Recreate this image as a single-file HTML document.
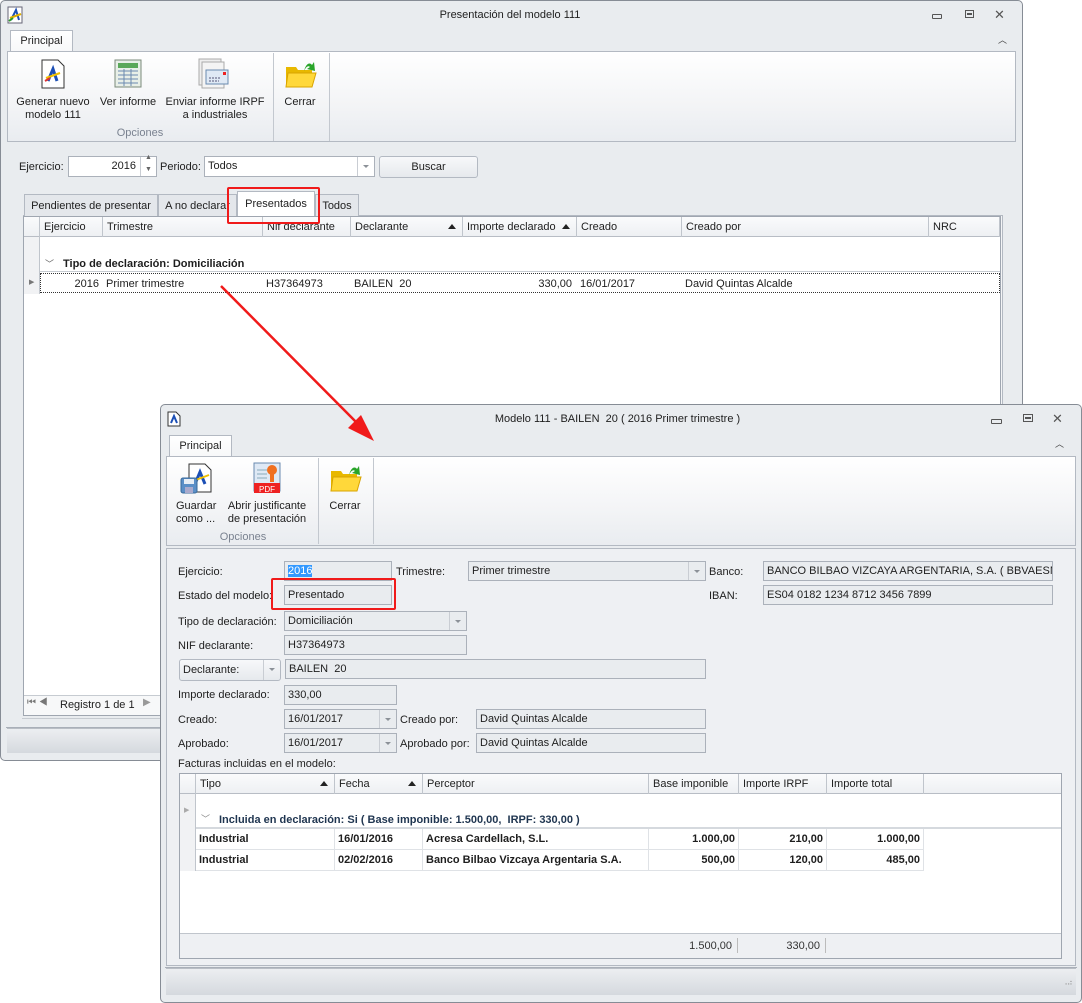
<!DOCTYPE html>
<html><head><meta charset="utf-8">
<style>
*{box-sizing:border-box;margin:0;padding:0}
body{width:1082px;height:1003px;background:#fff;position:relative;overflow:hidden;font-family:"Liberation Sans",Tahoma,sans-serif;font-size:11px;color:#1e1e1e}
.a{position:absolute}
.win{position:absolute;background:#e9ecef;border:1px solid #868c95;border-radius:5px}
.ribbon{position:absolute;background:linear-gradient(#fff,#f3f4f6 60%,#e9ecf0);border:1px solid #b3b9c2}
.tab{position:absolute;background:linear-gradient(#fff,#f7f8f9);border:1px solid #b3b9c2;border-bottom:none;text-align:center;line-height:20px}
.sep{position:absolute;width:1px;background:#c3c8cf}
.t{position:absolute;white-space:nowrap}
.c{text-align:center}
.inp{position:absolute;background:#fff;border:1px solid #abb1ba;line-height:18px;padding-left:3px;white-space:nowrap;overflow:hidden}
.ro{background:#e9ecef}
.dd{position:absolute;top:0;right:0;bottom:0;width:17px;border-left:1px solid #c9cdd3}
.dd:after{content:"";position:absolute;left:5px;top:8px;border:3px solid transparent;border-top:3px solid #8c9198}
.status{position:absolute;background:linear-gradient(#eceef1,#d5d9de);border-top:1px solid #b9bec5}
.grid{position:absolute;background:#fff;border:1px solid #9fa6b0}
.hd{position:absolute;height:20px;background:linear-gradient(#fafbfc,#eef0f3);border-bottom:1px solid #b8bdc5;line-height:19px}
.hc{position:absolute;top:0;height:20px;border-right:1px solid #c0c5cc;padding-left:4px}
.up:after{content:"";position:absolute;right:6px;top:7px;border:4px solid transparent;border-top:none;border-bottom:5px solid #222}
.bold{font-weight:bold}
.cell{position:absolute;height:21px;line-height:20px;border-right:1px solid #dfe2e6;border-bottom:1px solid #dfe2e6;padding:0 3px;font-weight:bold;white-space:nowrap}
.r{text-align:right}
</style></head><body>

<!-- WINDOW 1 -->
<div class="win" style="left:0;top:0;width:1023px;height:761px"></div>
<svg class="a" style="left:7px;top:6px" width="18" height="18"><rect x="1" y="1" width="14" height="16" fill="#fff" stroke="#667"/><path d="M4 14 L9 4 L12 14" stroke="#1c4fb5" stroke-width="2" fill="none"/><path d="M3 12 L14 8" stroke="#e0b000" stroke-width="2"/><path d="M2 15 L6 12" stroke="#2a9a2a" stroke-width="2"/></svg>
<div class="t" style="left:300px;width:420px;top:9px;text-align:center">Presentación del modelo 111</div>
<div class="a" style="left:932px;top:14px;width:10px;height:5px;border:1px solid #555;border-radius:1px"></div>
<div class="a" style="left:965px;top:10px;width:9px;height:8px;border:1px solid #555"></div><div class="a" style="left:967px;top:13px;width:5px;height:2px;background:#555"></div>
<div class="t" style="left:994px;top:7px;font-size:13px;color:#555">✕</div>
<div class="t" style="left:998px;top:33px;font-size:9px;color:#444">︿</div>

<div class="tab" style="left:10px;top:30px;width:63px;height:22px">Principal</div>
<div class="ribbon" style="left:7px;top:51px;width:1009px;height:91px"></div>
<div class="sep" style="left:273px;top:53px;height:88px"></div>
<div class="sep" style="left:329px;top:53px;height:88px"></div>
<svg class="a" style="left:40px;top:59px" width="26" height="30"><path d="M2 1H18L24 7V29H2Z" fill="#fff" stroke="#333"/><path d="M8 22 L13 10 L17 22" stroke="#1c4fb5" stroke-width="3" fill="none"/><path d="M6 19 L20 14" stroke="#f0c000" stroke-width="2"/><path d="M5 22 L10 19" stroke="#d33" stroke-width="2"/></svg>
<svg class="a" style="left:113px;top:59px" width="30" height="30"><rect x="2" y="1" width="26" height="27" fill="#e8efe8" stroke="#7a8a7a"/><rect x="5" y="4" width="20" height="5" fill="#5aa85a"/><g stroke="#6a8ab0"><path d="M5 12H25M5 16H25M5 20H25M5 24H25M11 10V27M18 10V27"/></g></svg>
<svg class="a" style="left:197px;top:58px" width="34" height="32"><rect x="2" y="1" width="22" height="26" fill="#eee" stroke="#aaa"/><rect x="5" y="4" width="22" height="26" fill="#f4f4f4" stroke="#aaa"/><rect x="9" y="12" width="22" height="14" fill="#dfe9f5" stroke="#6a8ab0"/><rect x="26" y="14" width="3" height="3" fill="#e22"/><path d="M12 20H24M12 23H22" stroke="#557" stroke-dasharray="2 1"/></svg>
<svg class="a" style="left:284px;top:57px" width="34" height="34"><path d="M2 10H12L14 13H28V30H2Z" fill="#e8b800"/><path d="M4 16H32L28 30H2Z" fill="#ffd83a" stroke="#d9a400"/><path d="M20 14 C22 6 26 5 28 8 L30 5 L31 14 L23 12 L26 10 C24 8 22 10 20 14Z" fill="#2aa52a"/></svg>
<div class="t c" style="left:12px;width:82px;top:96px;line-height:13px">Generar nuevo<br>modelo 111</div>
<div class="t c" style="left:98px;width:60px;top:96px">Ver informe</div>
<div class="t c" style="left:163px;width:104px;top:96px;line-height:13px">Enviar informe IRPF<br>a industriales</div>
<div class="t c" style="left:280px;width:40px;top:96px">Cerrar</div>
<div class="t c" style="left:100px;width:80px;top:127px;color:#7a8290">Opciones</div>

<div class="t" style="left:19px;top:161px">Ejercicio:</div>
<div class="inp" style="left:68px;top:156px;width:89px;height:21px;text-align:right;padding-right:20px;line-height:19px">2016</div>
<div class="a" style="left:140px;top:157px;width:1px;height:19px;background:#c9cdd3"></div>
<div class="t" style="left:145px;top:154px;font-size:7px;color:#666">▲</div><div class="t" style="left:145px;top:166px;font-size:7px;color:#666">▼</div>
<div class="t" style="left:160px;top:161px">Periodo:</div>
<div class="inp" style="left:204px;top:156px;width:171px;height:21px;line-height:19px">Todos<div class="dd"></div></div>
<div class="a" style="left:379px;top:156px;width:99px;height:22px;border:1px solid #b3b9c2;border-radius:3px;background:linear-gradient(#f7f8fa,#e6e9ed);text-align:center;line-height:21px">Buscar</div>

<div class="a" style="left:23px;top:215px;width:980px;height:501px;border:1px solid #b3b9c2;background:#f3f4f6"></div>
<div class="tab" style="left:24px;top:194px;width:134px;height:22px;background:#e4e7eb;line-height:22px">Pendientes de presentar</div>
<div class="tab" style="left:158px;top:194px;width:79px;height:22px;background:#e4e7eb;line-height:22px">A no declarar</div>
<div class="tab" style="left:315px;top:194px;width:44px;height:22px;background:#e4e7eb;line-height:22px">Todos</div>
<div class="tab" style="left:237px;top:191px;width:78px;height:25px;background:#fff;line-height:25px">Presentados</div>

<div class="grid" style="left:23px;top:216px;width:978px;height:500px"></div>
<div class="hd" style="left:24px;top:217px;width:976px;line-height:20px">
<div class="hc" style="left:0;width:16px"></div>
<div class="hc" style="left:16px;width:63px">Ejercicio</div>
<div class="hc" style="left:79px;width:160px">Trimestre</div>
<div class="hc" style="left:239px;width:88px">Nif declarante</div>
<div class="hc up" style="left:327px;width:112px">Declarante</div>
<div class="hc up" style="left:439px;width:114px">Importe declarado</div>
<div class="hc" style="left:553px;width:105px">Creado</div>
<div class="hc" style="left:658px;width:247px">Creado por</div>
<div class="hc" style="left:905px;width:71px">NRC</div>
</div>
<div class="a" style="left:24px;top:237px;width:16px;height:57px;background:#f1f2f4;border-right:1px solid #c0c5cc"></div>
<div class="t" style="left:45px;top:257px;color:#666;font-size:9px">﹀</div>
<div class="t bold" style="left:63px;top:258px">Tipo de declaración: Domiciliación</div>
<div class="a" style="left:40px;top:271px;width:960px;height:1px;background:#c6cbd1"></div>
<div class="a" style="left:40px;top:273px;width:960px;height:20px;border:1px dotted #333"></div>
<div class="t" style="left:29px;top:278px;font-size:7px;color:#777">▶</div>
<div class="t" style="left:40px;width:59px;top:278px;text-align:right">2016</div>
<div class="t" style="left:106px;top:278px">Primer trimestre</div>
<div class="t" style="left:266px;top:278px">H37364973</div>
<div class="t" style="left:354px;top:278px">BAILEN&nbsp; 20</div>
<div class="t" style="left:462px;width:110px;top:278px;text-align:right">330,00</div>
<div class="t" style="left:580px;top:278px">16/01/2017</div>
<div class="t" style="left:685px;top:278px">David Quintas Alcalde</div>
<div class="a" style="left:24px;top:695px;width:976px;height:20px;border-top:1px solid #c6cbd1;background:#f7f8f9"></div>
<div class="t" style="left:27px;top:697px;color:#777;font-size:10px">⏮ ◀</div>
<div class="t" style="left:60px;top:699px">Registro 1 de 1</div>
<div class="t" style="left:143px;top:697px;color:#999;font-size:10px">▶</div>
<div class="a" style="left:22px;top:716px;width:982px;height:3px;border-bottom:1px solid #c6cbd1"></div>
<div class="status" style="left:7px;top:728px;width:1009px;height:25px"></div>
<div class="a" style="left:6px;top:727px;width:1011px;height:1px;background:#a9afb8"></div>

<div class="a" style="left:227px;top:187px;width:93px;height:37px;border:2px solid #f01a1a;border-radius:2px"></div>

<!-- WINDOW 2 -->
<div class="win" style="left:160px;top:404px;width:922px;height:599px;background:#e9ecef"></div>
<svg class="a" style="left:167px;top:411px" width="14" height="16"><path d="M1 1H9L13 5V15H1Z" fill="#fff" stroke="#333"/><path d="M4 12 L7 5 L10 12" stroke="#1c4fb5" stroke-width="2" fill="none"/></svg>
<div class="t" style="left:420px;width:395px;top:413px;text-align:center">Modelo 111 - BAILEN&nbsp; 20 ( 2016 Primer trimestre )</div>
<div class="a" style="left:991px;top:419px;width:11px;height:5px;border:1px solid #555;border-radius:1px"></div>
<div class="a" style="left:1023px;top:414px;width:10px;height:8px;border:1px solid #555"></div><div class="a" style="left:1025px;top:417px;width:6px;height:2px;background:#555"></div>
<div class="t" style="left:1052px;top:411px;font-size:13px;color:#555">✕</div>
<div class="t" style="left:1055px;top:437px;font-size:9px;color:#444">︿</div>

<div class="tab" style="left:169px;top:435px;width:63px;height:22px">Principal</div>
<div class="ribbon" style="left:166px;top:456px;width:910px;height:90px"></div>
<div class="sep" style="left:318px;top:458px;height:86px"></div>
<div class="sep" style="left:373px;top:458px;height:86px"></div>
<svg class="a" style="left:180px;top:462px" width="34" height="34"><path d="M9 2H25L31 8V30H9Z" fill="#fff" stroke="#333"/><path d="M15 22 L20 10 L25 22" stroke="#1c4fb5" stroke-width="3" fill="none"/><path d="M13 19 L29 13" stroke="#f0c000" stroke-width="2"/><rect x="1" y="16" width="16" height="15" rx="2" fill="#5b8fc7" stroke="#3a6a9a"/><rect x="4" y="17" width="10" height="5" fill="#e8eef5"/><rect x="5" y="25" width="8" height="6" fill="#aac"/></svg>
<svg class="a" style="left:253px;top:462px" width="28" height="32"><rect x="1" y="1" width="26" height="28" fill="#dfe9f5" stroke="#6a8ab0"/><path d="M4 8H14M4 12H14M4 16H14" stroke="#8ab"/><circle cx="19" cy="8" r="5" fill="#f07020"/><rect x="17" y="12" width="4" height="8" fill="#f07020"/><rect x="1" y="21" width="26" height="10" fill="#e22"/><text x="14" y="30" font-size="8" fill="#fff" text-anchor="middle" font-family="Liberation Sans">PDF</text></svg>
<svg class="a" style="left:329px;top:461px" width="34" height="34"><path d="M2 10H12L14 13H28V30H2Z" fill="#e8b800"/><path d="M4 16H32L28 30H2Z" fill="#ffd83a" stroke="#d9a400"/><path d="M20 14 C22 6 26 5 28 8 L30 5 L31 14 L23 12 L26 10 C24 8 22 10 20 14Z" fill="#2aa52a"/></svg>
<div class="t" style="left:176px;top:500px;line-height:13px">Guardar<br>como ...</div>
<div class="t c" style="left:224px;width:86px;top:500px;line-height:13px">Abrir justificante<br>de presentación</div>
<div class="t c" style="left:325px;width:40px;top:500px">Cerrar</div>
<div class="t c" style="left:203px;width:80px;top:531px;color:#7a8290">Opciones</div>

<div class="a" style="left:166px;top:548px;width:910px;height:418px;border:1px solid #b3b9c2;background:#eef0f3"></div>

<div class="t" style="left:178px;top:566px">Ejercicio:</div>
<div class="inp ro" style="left:284px;top:561px;width:108px;height:20px"><span style="background:#3399ff;color:#fff">2016</span></div>
<div class="t" style="left:396px;top:566px">Trimestre:</div>
<div class="inp ro" style="left:468px;top:561px;width:238px;height:20px">Primer trimestre<div class="dd"></div></div>
<div class="t" style="left:709px;top:566px">Banco:</div>
<div class="inp ro" style="left:763px;top:561px;width:290px;height:20px">BANCO BILBAO VIZCAYA ARGENTARIA, S.A. ( BBVAESMM)</div>

<div class="t" style="left:178px;top:590px">Estado del modelo:</div>
<div class="inp ro" style="left:284px;top:585px;width:108px;height:20px">Presentado</div>
<div class="a" style="left:271px;top:578px;width:125px;height:32px;border:2px solid #f01a1a;border-radius:2px"></div>
<div class="t" style="left:709px;top:590px">IBAN:</div>
<div class="inp ro" style="left:763px;top:585px;width:290px;height:20px">ES04 0182 1234 8712 3456 7899</div>

<div class="t" style="left:178px;top:616px">Tipo de declaración:</div>
<div class="inp ro" style="left:284px;top:611px;width:183px;height:20px">Domiciliación<div class="dd"></div></div>
<div class="t" style="left:178px;top:640px">NIF declarante:</div>
<div class="inp ro" style="left:284px;top:635px;width:183px;height:20px">H37364973</div>

<div class="a" style="left:179px;top:659px;width:102px;height:22px;border:1px solid #b3b9c2;border-radius:3px;background:linear-gradient(#f7f8fa,#e6e9ed);line-height:20px;padding-left:3px">Declarante:<div class="dd" style="border-left:1px solid #c9cdd3"></div></div>
<div class="inp ro" style="left:285px;top:659px;width:421px;height:20px">BAILEN&nbsp; 20</div>

<div class="t" style="left:178px;top:689px">Importe declarado:</div>
<div class="inp ro" style="left:284px;top:685px;width:113px;height:20px">330,00</div>
<div class="t" style="left:178px;top:714px">Creado:</div>
<div class="inp ro" style="left:284px;top:709px;width:113px;height:20px">16/01/2017<div class="dd"></div></div>
<div class="t" style="left:400px;top:714px">Creado por:</div>
<div class="inp ro" style="left:476px;top:709px;width:230px;height:20px">David Quintas Alcalde</div>
<div class="t" style="left:178px;top:738px">Aprobado:</div>
<div class="inp ro" style="left:284px;top:733px;width:113px;height:20px">16/01/2017<div class="dd"></div></div>
<div class="t" style="left:400px;top:738px">Aprobado por:</div>
<div class="inp ro" style="left:476px;top:733px;width:230px;height:20px">David Quintas Alcalde</div>
<div class="t" style="left:178px;top:758px">Facturas incluidas en el modelo:</div>

<div class="grid" style="left:179px;top:773px;width:883px;height:186px"></div>
<div class="hd" style="left:180px;top:774px;width:881px;line-height:20px">
<div class="hc" style="left:0;width:16px"></div>
<div class="hc up" style="left:16px;width:139px">Tipo</div>
<div class="hc up" style="left:155px;width:88px">Fecha</div>
<div class="hc" style="left:243px;width:226px">Perceptor</div>
<div class="hc" style="left:469px;width:90px">Base imponible</div>
<div class="hc" style="left:559px;width:88px">Importe IRPF</div>
<div class="hc" style="left:647px;width:97px">Importe total</div>
</div>
<div class="a" style="left:180px;top:794px;width:16px;height:77px;background:#f1f2f4;border-right:1px solid #c0c5cc"></div>
<div class="t" style="left:184px;top:806px;font-size:7px;color:#aaa">▶</div>
<div class="t" style="left:201px;top:812px;color:#888;font-size:9px">﹀</div>
<div class="t bold" style="left:219px;top:814px;color:#1f3550">Incluida en declaración: Si ( Base imponible: 1.500,00,&nbsp; IRPF: 330,00 )</div>
<div class="a" style="left:196px;top:827px;width:865px;height:2px;background:#d5d9de"></div>
<div class="cell" style="left:196px;top:829px;width:139px">Industrial</div>
<div class="cell" style="left:335px;top:829px;width:88px">16/01/2016</div>
<div class="cell" style="left:423px;top:829px;width:226px">Acresa Cardellach, S.L.</div>
<div class="cell r" style="left:649px;top:829px;width:90px">1.000,00</div>
<div class="cell r" style="left:739px;top:829px;width:88px">210,00</div>
<div class="cell r" style="left:827px;top:829px;width:97px">1.000,00</div>
<div class="cell" style="left:196px;top:850px;width:139px">Industrial</div>
<div class="cell" style="left:335px;top:850px;width:88px">02/02/2016</div>
<div class="cell" style="left:423px;top:850px;width:226px">Banco Bilbao Vizcaya Argentaria S.A.</div>
<div class="cell r" style="left:649px;top:850px;width:90px">500,00</div>
<div class="cell r" style="left:739px;top:850px;width:88px">120,00</div>
<div class="cell r" style="left:827px;top:850px;width:97px">485,00</div>
<div class="a" style="left:180px;top:933px;width:881px;height:25px;border-top:1px solid #c0c5cc;background:#eef0f3"></div>
<div class="t" style="left:649px;width:83px;top:940px;text-align:right;color:#333">1.500,00</div>
<div class="a" style="left:737px;top:938px;width:1px;height:15px;background:#bbb"></div>
<div class="t" style="left:739px;width:81px;top:940px;text-align:right;color:#333">330,00</div>
<div class="a" style="left:825px;top:938px;width:1px;height:15px;background:#bbb"></div>

<div class="status" style="left:166px;top:968px;width:910px;height:27px"></div>
<div class="a" style="left:165px;top:967px;width:912px;height:1px;background:#a9afb8"></div>
<div class="t" style="left:1062px;top:978px;font-size:8px;color:#999;letter-spacing:-1px">⠠⠴</div>

<!-- ARROW on top -->
<svg class="a" style="left:0;top:0" width="1082" height="1003"><line x1="221" y1="286" x2="362" y2="428" stroke="#f01a1a" stroke-width="2.5"/><polygon points="374,441 348,428 361,415" fill="#f01a1a"/></svg>
</body></html>
